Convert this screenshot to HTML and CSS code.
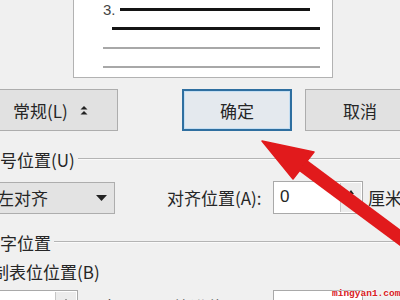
FILE: index.html
```html
<!DOCTYPE html>
<html lang="zh-CN">
<head>
    <meta charset="UTF-8">
    <title>定义新多级列表</title>
    <link rel="stylesheet" href="styles.css">
</head>
<body>
    <div class="dialog">
        <!-- Preview of the list levels -->
        <div class="preview">
            <div class="pv-row pv-first"><span class="pv-num">3.</span><span class="pv-line dark"></span></div>
            <div class="pv-row pv-second"><span class="pv-line dark"></span></div>
            <div class="pv-row pv-rest"><span class="pv-line light"></span></div>
            <div class="pv-row pv-rest"><span class="pv-line light"></span></div>
        </div>

        <div class="button-row">
            <button class="btn btn-more">常规(L)
                <svg class="more-icon" width="8" height="9" viewBox="0 0 8 9">
                    <polygon points="4,0 7.5,3.5 0.5,3.5" fill="#222"/>
                    <polygon points="4,5 7.5,8.5 0.5,8.5" fill="#222"/>
                </svg>
            </button>
            <button class="btn btn-ok">确定</button>
            <button class="btn btn-cancel">取消</button>
        </div>

        <div class="group-title"><span>编号位置(U)</span><span class="group-line"></span></div>
        <div class="field-row">
            <div class="left-cell">
                <div class="select">
                    <span>左对齐</span>
                    <svg class="select-arrow" width="11" height="6" viewBox="0 0 11 6"><polygon points="0,0 11,0 5.5,6" fill="#222"/></svg>
                </div>
            </div>
            <span class="field-label">对齐位置(A):</span>
            <div class="spin-input">
                <span class="value">0</span>
                <span class="spinner">
                    <svg width="8" height="22" viewBox="0 0 8 22">
                        <polygon points="4,3 7,7 1,7" fill="#222"/>
                        <polygon points="4,19 7,15 1,15" fill="#222"/>
                    </svg>
                </span>
            </div>
            <span class="unit">厘米</span>
        </div>

        <div class="group-title"><span>文字位置</span><span class="group-line"></span></div>
        <div class="sub-label">制表位位置(B)</div>
        <div class="field-row">
            <div class="left-cell">
                <div class="spin-input small">
                    <span class="value"></span>
                    <span class="spinner">
                        <svg width="8" height="22" viewBox="0 0 8 22">
                            <polygon points="4,3 7,7 1,7" fill="#222"/>
                            <polygon points="4,19 7,15 1,15" fill="#222"/>
                        </svg>
                    </span>
                </div>
                <span class="unit">厘米</span>
            </div>
            <span class="field-label indent">缩进位置(I):</span>
            <div class="spin-input"><span class="value"></span></div>
        </div>
    </div>

    <!-- red annotation arrow drawn over the dialog -->
    <svg class="arrow" width="400" height="300" viewBox="0 0 400 300">
        <polygon points="262,141 314,152 293,179" fill="#e11a1c" stroke="#e11a1c" stroke-width="1.5" stroke-linejoin="round"/>
        <polygon points="307,160 299,171 420,261 428,250" fill="#e11a1c"/>
    </svg>
    <div class="watermark">mingyan1.com</div>
</body>
</html>
```

FILE: styles.css
```css
body {
    margin: 0;
    width: 400px;
    height: 300px;
    overflow: hidden;
    position: relative;
    background: #f0f0f0;
    font-family: "Noto Sans CJK SC", "Noto Sans", sans-serif;
    font-size: 17px;
    color: #262626;
}

.dialog {
    margin-left: -18px;
    width: 440px;
}

/* preview box */
.preview {
    margin-left: 91px;
    width: 260px;
    height: 78px;
    box-sizing: border-box;
    background: #fff;
    border: 1px solid #b2b2b2;
    border-top: none;
}

.pv-row {
    display: flex;
    align-items: center;
    height: 19px;
}

.pv-first {
    padding-left: 29px;
    padding-right: 22px;
}

.pv-second {
    padding-left: 38px;
    padding-right: 12px;
}

.pv-rest {
    padding-left: 29px;
    padding-right: 12px;
}

.pv-num {
    font-family: "Liberation Sans", Arial, sans-serif;
    font-size: 15px;
    color: #444;
    margin-right: 4px;
}

.pv-line {
    flex: 1;
}

.pv-line.dark {
    height: 3px;
    background: #141414;
}

.pv-line.light {
    height: 2px;
    background: #a8a8a8;
}

/* buttons */
.button-row {
    display: flex;
    margin-top: 11px;
    height: 42px;
}

.btn {
    box-sizing: border-box;
    height: 42px;
    font-family: inherit;
    font-size: 17px;
    color: #262626;
    background: #e1e1e1;
    border: 1px solid #adadad;
    padding: 0;
}

.btn-more {
    width: 136px;
    text-align: left;
    padding-left: 30px;
    display: flex;
    align-items: center;
}

.more-icon {
    margin-left: 12px;
}

.btn-ok {
    width: 110px;
    margin-left: 64px;
    border: 2px solid #2f6fa0;
    background: #e4e9ee;
    box-shadow: inset 0 0 0 1px #c4def2;
}

.btn-cancel {
    width: 110px;
    margin-left: 13px;
}

/* group headings */
.group-title {
    display: flex;
    align-items: center;
    height: 20px;
    margin-top: 18px;
    padding-left: 1px;
    white-space: nowrap;
}

.group-line {
    flex: 1;
    margin-left: 3px;
    height: 1px;
    background: #b4b4b4;
    border-bottom: 1px solid #fafafa;
}

.sub-label {
    margin-top: 10px;
    height: 20px;
    line-height: 20px;
    padding-left: 10px;
}

/* field rows */
.field-row {
    display: flex;
    align-items: center;
    margin-top: 12px;
    height: 33px;
    padding-left: 10px;
    white-space: nowrap;
}

.sub-label + .field-row {
    margin-top: 8px;
}

.left-cell {
    width: 175px;
    display: flex;
    align-items: center;
}

.select {
    box-sizing: border-box;
    width: 123px;
    height: 32px;
    display: flex;
    align-items: center;
    padding-left: 4px;
    padding-right: 7px;
    background: #e3e3e3;
    border: 1px solid #adadad;
}

.select-arrow {
    margin-left: auto;
}

.field-label {
    width: 106px;
    box-sizing: border-box;
}

.field-label.indent {
    padding-left: 6px;
}

.spin-input {
    box-sizing: border-box;
    width: 90px;
    height: 33px;
    display: flex;
    background: #fff;
    border: 1px solid #a9a9a9;
}

.spin-input.small {
    width: 86px;
}

.spin-input .value {
    flex: 1;
    padding-left: 6px;
    line-height: 30px;
    font-family: "Liberation Sans", Arial, sans-serif;
}

.spinner {
    width: 20px;
    display: flex;
    align-items: center;
    justify-content: center;
    background: #ececec;
    border-left: 1px solid #c6c6c6;
    margin: 1px;
}

.unit {
    margin-left: 5px;
}

.left-cell .unit {
    margin-left: 6px;
}

/* overlays */
.arrow {
    position: absolute;
    top: 0;
    left: 0;
    pointer-events: none;
}

.watermark {
    position: absolute;
    left: 332px;
    top: 288px;
    font-family: "Liberation Mono", monospace;
    font-size: 9.5px;
    font-weight: bold;
    line-height: 11px;
    color: #d8201e;
    text-shadow: 0 0 2px #fff, 0 0 2px #fff;
}
```
